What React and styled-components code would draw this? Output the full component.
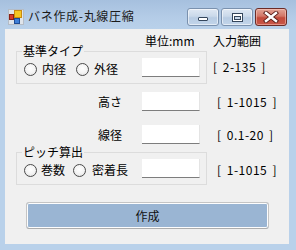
import React from 'react';
import styled, { createGlobalStyle } from 'styled-components';

const Global = createGlobalStyle`
  html, body { margin: 0; padding: 0; background: #b9d1ea; }
  body {
    font-family: "Noto Sans CJK JP", "Noto Sans", sans-serif;
    font-size: 12px;
    color: #000;
  }
  * { box-sizing: border-box; }
`;

const Window = styled.div`
  width: 296px;
  height: 250px;
  display: flex;
  flex-direction: column;
  background: #b9d1ea;
`;

const TitleBar = styled.div`
  height: 29px;
  flex: none;
  display: flex;
  align-items: flex-start;
  padding: 0 9px 0 8px;
  background: linear-gradient(#a6c0de, #b4cce7 60%, #b9d1ea);
`;

const AppIcon = styled.svg`
  margin-top: 9px;
  width: 16px;
  height: 16px;
  flex: none;
`;

const Title = styled.div`
  margin-top: 9px;
  margin-left: 4px;
  line-height: 14px;
  font-size: 12px;
  letter-spacing: 0.7px;
  color: #1b1b1b;
`;

const Controls = styled.div`
  margin-left: auto;
  margin-top: 8px;
  display: flex;
  gap: 2px;
`;

const CtrlButton = styled.div`
  width: 32px;
  height: 18px;
  border: 1px solid ${(p) => (p.$close ? '#6b2c27' : '#7a91ae')};
  border-radius: 3px;
  display: flex;
  align-items: center;
  justify-content: center;
  background: ${(p) =>
    p.$close
      ? 'linear-gradient(#e3a597, #d27566 45%, #c24a3b 55%, #c9584a)'
      : 'linear-gradient(#dfe8f3, #cad9ea 45%, #b8cce3 55%, #c2d5ea)'};
  box-shadow: inset 0 0 0 1px ${(p) => (p.$close ? 'rgba(255,210,200,0.5)' : 'rgba(255,255,255,0.55)')};
`;

const MinGlyph = styled.span`
  display: block;
  width: 10px;
  height: 4px;
  margin-top: 3px;
  background: #fff;
  border: 1px solid #34465c;
  border-radius: 1px;
`;

const Frame = styled.div`
  flex: 1;
  display: flex;
  padding: 0 7px 6px 5px;
`;

const Client = styled.div`
  flex: 1;
  background: #f0f0f0;
  padding: 5px 0 0 11px;
  display: flex;
  flex-direction: column;
`;

const Row = styled.div`
  display: flex;
  align-items: flex-start;
  height: ${(p) => p.$h}px;
  margin-top: ${(p) => p.$mt || 0}px;
`;

const LeftCol = styled.div`
  width: 191px;
  flex: none;
  display: flex;
  align-items: center;
  padding-left: ${(p) => p.$pl || 0}px;
`;

const Text = styled.span`
  line-height: 14px;
  white-space: nowrap;
`;

const Range = styled.span`
  line-height: 14px;
  white-space: nowrap;
  margin-left: ${(p) => p.$ml}px;
  margin-top: ${(p) => p.$mt || 0}px;
  letter-spacing: ${(p) => (p.$wide ? '0.5px' : '0')};
  word-spacing: ${(p) => (p.$wide ? '2px' : '0')};
`;

const FieldLabel = styled.span`
  width: 106px;
  text-align: right;
  line-height: 14px;
  white-space: nowrap;
  margin-right: 20px;
`;

const TextBox = styled.div`
  width: 58px;
  height: 19px;
  flex: none;
  background: #fff;
  border-bottom: 1px solid #7d7d7d;
  border-right: 1px solid #e4e4e4;
  margin-left: ${(p) => (p.$auto ? 'auto' : '0')};
`;

const Group = styled.div`
  position: relative;
  width: 191px;
  margin-top: 7px;
  padding: 6px 6px 0 7px;
  border: 1px solid #dcdcdc;
  flex: none;
`;

const Caption = styled.span`
  position: absolute;
  left: 5px;
  top: -8px;
  padding: 0 1px;
  line-height: 14px;
  background: #f0f0f0;
  white-space: nowrap;
`;

const GroupBody = styled.div`
  height: 25px;
  display: flex;
  align-items: flex-start;
`;

const RadioItem = styled.label`
  display: flex;
  align-items: center;
  margin-top: 4px;
  width: ${(p) => (p.$w ? `${p.$w}px` : 'auto')};
  flex: none;
`;

const RadioCircle = styled.span`
  width: 13px;
  height: 13px;
  border-radius: 50%;
  border: 1px solid #4a4a4a;
  background: radial-gradient(circle at 50% 40%, #ffffff 0%, #f4f4f4 50%, #dcdcdc 100%);
  margin-right: ${(p) => p.$gap}px;
  flex: none;
`;

const Button = styled.div`
  margin-top: 17px;
  margin-left: 10px;
  width: 243px;
  height: 27px;
  border: 1px solid #c4c4c4;
  border-bottom-color: #adadad;
  border-radius: 3px;
  background: #9ab5d3;
  box-shadow: inset 0 0 0 1px #fdfdfd;
  display: flex;
  align-items: center;
  justify-content: center;
  line-height: 14px;
  color: #111;
`;

export default function App() {
  return (
    <>
      <Global />
      <Window>
        <TitleBar>
          <AppIcon viewBox="0 0 16 16">
            <rect x="0.5" y="0.5" width="15" height="15" fill="#dfe4ea" stroke="#b4bcc6" />
            <rect x="1.5" y="5.5" width="4" height="5" fill="#d83a2c" stroke="#8c1f14" />
            <rect x="6.5" y="1.5" width="7" height="7" fill="#f5c623" stroke="#c98a10" />
            <rect x="6.5" y="9.5" width="5" height="5" fill="#3f7fd8" stroke="#1f4c95" />
          </AppIcon>
          <Title>バネ作成-丸線圧縮</Title>
          <Controls>
            <CtrlButton>
              <MinGlyph />
            </CtrlButton>
            <CtrlButton>
              <svg width="11" height="9" viewBox="0 0 11 9">
                <rect x="0.5" y="0.5" width="10" height="8" fill="#fff" stroke="#34465c" />
                <rect x="2.5" y="3.5" width="6" height="3" fill="#c9d8ea" stroke="#34465c" />
              </svg>
            </CtrlButton>
            <CtrlButton $close>
              <svg width="16" height="12" viewBox="0 0 16 12">
                <path d="M3 2 L13 10 M13 2 L3 10" stroke="#5a1f1a" strokeWidth="4.2" strokeLinecap="square" />
                <path d="M3 2 L13 10 M13 2 L3 10" stroke="#fff" strokeWidth="2.4" strokeLinecap="square" />
              </svg>
            </CtrlButton>
          </Controls>
        </TitleBar>
        <Frame>
          <Client>
            <Row $h={10}>
              <LeftCol $pl={129}>
                <Text>単位:mm</Text>
              </LeftCol>
              <Range $ml={6}>入力範囲</Range>
            </Row>
            <Row $h={40}>
              <Group>
                <Caption>基準タイプ</Caption>
                <GroupBody>
                  <RadioItem $w={52}>
                    <RadioCircle $gap={5} />
                    <Text>内径</Text>
                  </RadioItem>
                  <RadioItem>
                    <RadioCircle $gap={5} />
                    <Text>外径</Text>
                  </RadioItem>
                  <TextBox $auto />
                </GroupBody>
              </Group>
              <Range $ml={6} $mt={16} $wide>[ 2-135 ]</Range>
            </Row>
            <Row $h={19} $mt={8}>
              <LeftCol>
                <FieldLabel>高さ</FieldLabel>
                <TextBox />
              </LeftCol>
              <Range $ml={10} $mt={3} $wide>[ 1-1015 ]</Range>
            </Row>
            <Row $h={19} $mt={14}>
              <LeftCol>
                <FieldLabel>線径</FieldLabel>
                <TextBox />
              </LeftCol>
              <Range $ml={10} $mt={3} $wide>[ 0.1-20 ]</Range>
            </Row>
            <Row $h={40} $mt={1}>
              <Group>
                <Caption>ピッチ算出</Caption>
                <GroupBody>
                  <RadioItem $w={49}>
                    <RadioCircle $gap={4} />
                    <Text>巻数</Text>
                  </RadioItem>
                  <RadioItem>
                    <RadioCircle $gap={6} />
                    <Text>密着長</Text>
                  </RadioItem>
                  <TextBox $auto />
                </GroupBody>
              </Group>
              <Range $ml={10} $mt={18} $wide>[ 1-1015 ]</Range>
            </Row>
            <Button>作成</Button>
          </Client>
        </Frame>
      </Window>
    </>
  );
}
